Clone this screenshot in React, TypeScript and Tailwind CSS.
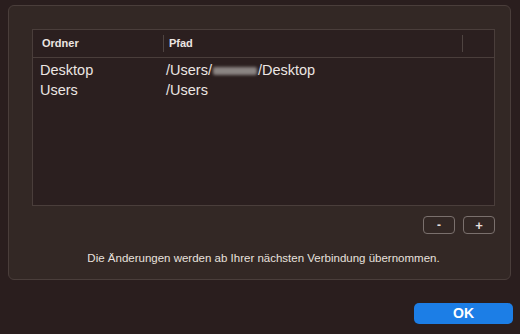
export default function App() {
  const rows = [
    { name: "Desktop", path: "desktop" },
    { name: "Users", path: "/Users" },
  ];

  return (
    <div
      className="w-[520px] h-[334px] bg-[#2a1e1e] text-[#e6dfdc] overflow-hidden"
      style={{ fontFamily: '"Liberation Sans", Arial, sans-serif' }}
    >
      <div className="ml-[8px] mt-[5px] w-[503px] h-[275px] rounded-[6px] border border-[#4a3e3b] bg-[#332825] pl-[23px] pr-[15px] pt-[23px]">
        <div className="w-[463px] h-[177px] border border-[#4a3e3b] bg-[#2b1f1f]">
          <div className="flex h-[28px] items-center border-b border-[#4a3e3b] text-[11px] font-bold text-[#ebe5e2]">
            <div className="w-[130px] pl-[9px]">Ordner</div>
            <div className="h-[17px] w-px bg-[#4f4441]" />
            <div className="flex-1 pl-[5px]">Pfad</div>
            <div className="mr-[31px] h-[17px] w-px bg-[#4f4441]" />
          </div>
          <div className="pt-[3px] text-[14.5px] text-[#ece6e3]">
            {rows.map((r) => (
              <div key={r.name} className="flex h-[20px] items-center">
                <div className="w-[131px] pl-[7px]">{r.name}</div>
                <div className="pl-[2px]">
                  {r.path === "desktop" ? (
                    <span className="flex items-center">
                      /Users/
                      <span className="mx-[1px] inline-block h-[8px] w-[44px] rounded-[2px] bg-[#8a8482] blur-[1.5px]" />
                      /Desktop
                    </span>
                  ) : (
                    r.path
                  )}
                </div>
              </div>
            ))}
          </div>
        </div>
        <div className="mt-[10px] flex w-[463px] justify-end gap-[8px]">
          <button className="flex h-[18px] w-[32px] items-center justify-center rounded-[4px] border border-[#7a706d] text-[12px] font-bold leading-none text-[#e6dfdc]">
            -
          </button>
          <button className="flex h-[18px] w-[32px] items-center justify-center rounded-[4px] border border-[#7a706d] text-[13px] font-bold leading-none text-[#e6dfdc]">
            +
          </button>
        </div>
        <div className="mt-[16px] w-[463px] text-center text-[11.5px] text-[#e8e1de]">
          Die Änderungen werden ab Ihrer nächsten Verbindung übernommen.
        </div>
      </div>
      <div className="mt-[23px] flex justify-end pr-[7px]">
        <button className="h-[21px] w-[99px] rounded-[5px] bg-[#1c7ee6] text-[14px] font-bold text-white">
          OK
        </button>
      </div>
    </div>
  );
}
